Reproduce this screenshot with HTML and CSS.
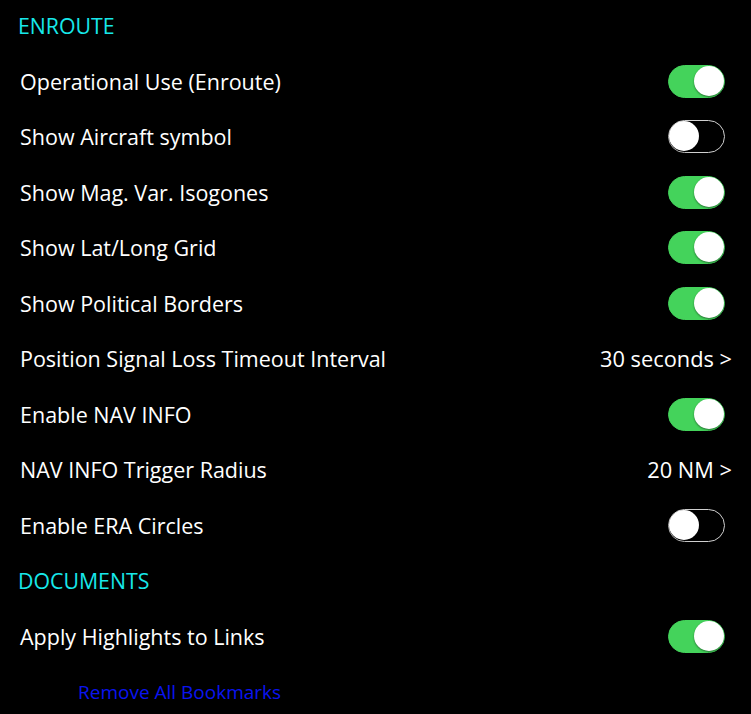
FILE: index.html
```html
<!DOCTYPE html>
<html>
<head>
<meta charset="utf-8">
<link rel="stylesheet" href="styles.css">
</head>
<body>
<div class="list">
  <div class="row header">ENROUTE</div>
  <div class="row"><span class="label">Operational Use (Enroute)</span><span class="toggle on"><span class="knob"></span></span></div>
  <div class="row"><span class="label">Show Aircraft symbol</span><span class="toggle"><span class="knob"></span></span></div>
  <div class="row"><span class="label">Show Mag. Var. Isogones</span><span class="toggle on"><span class="knob"></span></span></div>
  <div class="row"><span class="label">Show Lat/Long Grid</span><span class="toggle on"><span class="knob"></span></span></div>
  <div class="row"><span class="label">Show Political Borders</span><span class="toggle on"><span class="knob"></span></span></div>
  <div class="row"><span class="label">Position Signal Loss Timeout Interval</span><span class="value">30 seconds &gt;</span></div>
  <div class="row"><span class="label">Enable NAV INFO</span><span class="toggle on"><span class="knob"></span></span></div>
  <div class="row"><span class="label">NAV INFO Trigger Radius</span><span class="value">20 NM &gt;</span></div>
  <div class="row"><span class="label">Enable ERA Circles</span><span class="toggle"><span class="knob"></span></span></div>
  <div class="row header">DOCUMENTS</div>
  <div class="row"><span class="label">Apply Highlights to Links</span><span class="toggle on"><span class="knob"></span></span></div>
  <div class="row link-row"><span class="link">Remove All Bookmarks</span></div>
</div>
</body>
</html>
```
FILE: styles.css
```css
html, body {
  margin: 0;
  padding: 0;
  background: #000;
}
body {
  font-family: "Open Sans", "Noto Sans", sans-serif;
  color: #fff;
  width: 751px;
  height: 714px;
  overflow: hidden;
}
.list {
  margin-top: -2px;
  display: flex;
  flex-direction: column;
}
.row {
  height: 55.5px;
  display: flex;
  align-items: center;
  justify-content: space-between;
  padding: 0 26px 0 20px;
  font-size: 21.5px;
}
.header {
  color: #17e8ea;
  padding-left: 18px;
  font-size: 21.3px;
}
.value {
  margin-right: -7px;
  font-size: 21.8px;
}
.toggle {
  position: relative;
  width: 57px;
  height: 33px;
  box-sizing: border-box;
  border-radius: 17px;
  border: 1.5px solid #d0d0d0;
  background: #000;
}
.toggle.on {
  background: #44d35b;
  border-color: #44d35b;
}
.knob {
  position: absolute;
  top: 0;
  left: 0;
  width: 30px;
  height: 30px;
  border-radius: 50%;
  background: #fff;
  box-shadow: 0 1px 2px rgba(0,0,0,0.45);
}
.toggle.on .knob {
  left: auto;
  right: 0;
}
.link-row {
  padding-left: 78px;
}
.link {
  color: #0a14f0;
  font-size: 19px;
}
```
